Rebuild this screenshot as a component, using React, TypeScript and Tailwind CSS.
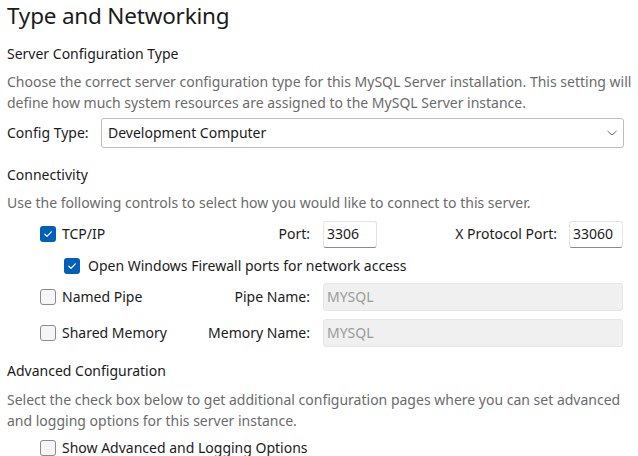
import React from "react";

const Check = ({ checked }: { checked: boolean }) =>
  checked ? (
    <span className="flex h-[16px] w-[16px] shrink-0 items-center justify-center rounded-[3px] bg-[#005fb8]">
      <svg width="10" height="10" viewBox="0 0 10 10" fill="none">
        <path d="M1.8 5.2 L4 7.3 L8.3 2.8" stroke="#ffffff" strokeWidth="1.2" strokeLinecap="round" strokeLinejoin="round" />
      </svg>
    </span>
  ) : (
    <span className="block h-[16px] w-[16px] shrink-0 rounded-[3px] border border-[#8b8b8b] bg-[#f6f6f6]" />
  );

export default function App() {
  return (
    <div
      className="h-[456px] w-[638px] overflow-hidden bg-white pl-[7px] text-[14px] leading-[20px] text-[#1b1b1b] whitespace-nowrap"
      style={{ fontFamily: '"Noto Sans", "Open Sans", sans-serif' }}
    >
      <div className="text-[22.5px] leading-[32px] tracking-[-0.2px]">Type and Networking</div>
      <div className="mt-[12px]">Server Configuration Type</div>
      <div className="mt-[7px] leading-[21px] text-[#6b6b6b]">
        Choose the correct server configuration type for this MySQL Server installation. This setting will
        <br />
        define how much system resources are assigned to the MySQL Server instance.
      </div>
      <div className="mt-[5px] flex items-center">
        <span className="w-[94px]">Config Type:</span>
        <div className="flex h-[30px] w-[523px] items-center justify-between rounded-[3px] border border-[#bdbdbd] pl-[6px] pr-[5px]">
          <span>Development Computer</span>
          <svg width="12" height="8" viewBox="0 0 12 8" fill="none">
            <path d="M1.5 2 L6 6 L10.5 2" stroke="#707070" strokeWidth="1" />
          </svg>
        </div>
      </div>
      <div className="mt-[17px]">Connectivity</div>
      <div className="mt-[7px] leading-[21px] text-[#6b6b6b]">Use the following controls to select how you would like to connect to this server.</div>

      <div className="mt-[7px] flex h-[28px] items-center">
        <div className="flex w-[303px] items-center pl-[33px]">
          <Check checked />
          <span className="ml-[6px]">TCP/IP</span>
          <span className="ml-auto">Port:</span>
        </div>
        <div className="ml-[13px] flex h-[27px] w-[54px] items-center rounded-[3px] border border-[#e3e3e3] border-b-[#8a8a8a] bg-white pl-[3px]">3306</div>
        <span className="ml-auto">X Protocol Port:</span>
        <div className="ml-[12px] mr-[15px] flex h-[27px] w-[54px] items-center rounded-[3px] border border-[#e3e3e3] border-b-[#8a8a8a] bg-white pl-[3px]">33060</div>
      </div>

      <div className="mt-[6px] flex h-[24px] items-center pl-[57px]">
        <Check checked />
        <span className="ml-[8px]">Open Windows Firewall ports for network access</span>
      </div>

      <div className="mt-[5px] flex h-[28px] items-center">
        <div className="flex w-[303px] items-center pl-[33px]">
          <Check checked={false} />
          <span className="ml-[6px]">Named Pipe</span>
          <span className="ml-auto">Pipe Name:</span>
        </div>
        <div className="ml-[13px] flex h-[28px] w-[300px] items-center rounded-[3px] border border-[#e6e6e6] bg-[#f0f0f0] pl-[3px] text-[#9a9a9a]">MYSQL</div>
      </div>

      <div className="mt-[8px] flex h-[28px] items-center">
        <div className="flex w-[303px] items-center pl-[33px]">
          <Check checked={false} />
          <span className="ml-[6px]">Shared Memory</span>
          <span className="ml-auto">Memory Name:</span>
        </div>
        <div className="ml-[13px] flex h-[28px] w-[300px] items-center rounded-[3px] border border-[#e6e6e6] bg-[#f0f0f0] pl-[3px] text-[#9a9a9a]">MYSQL</div>
      </div>

      <div className="mt-[14px]">Advanced Configuration</div>
      <div className="mt-[8px] leading-[21px] text-[#6b6b6b]">
        Select the check box below to get additional configuration pages where you can set advanced
        <br />
        and logging options for this server instance.
      </div>
      <div className="mt-[8px] flex h-[18px] items-center pl-[33px]">
        <Check checked={false} />
        <span className="ml-[6px]">Show Advanced and Logging Options</span>
      </div>
    </div>
  );
}
